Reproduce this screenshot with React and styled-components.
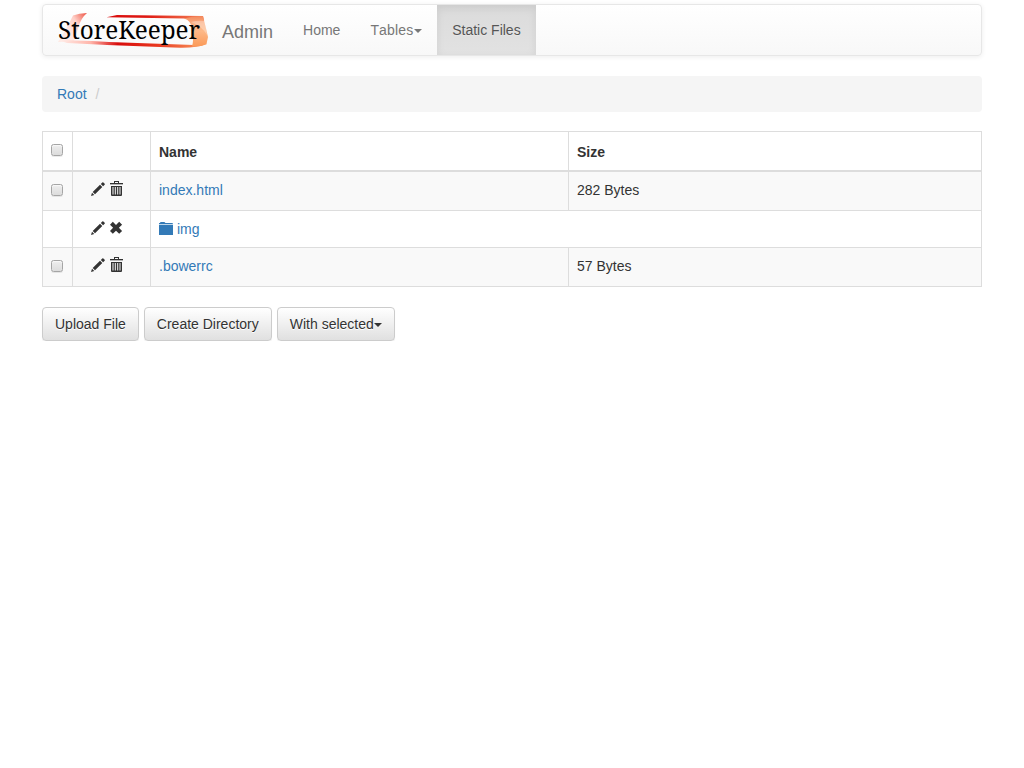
import React from 'react';
import styled, { createGlobalStyle } from 'styled-components';

const Global = createGlobalStyle`
  *, *::before, *::after { box-sizing: border-box; }
  body {
    margin: 0;
    background: #fff;
    color: #333;
    font: 14px/20px "Liberation Sans", Arial, sans-serif;
  }
`;

const Container = styled.div`
  width: 940px;
  margin: 0 auto;
  padding-top: 4px;
`;

const Navbar = styled.nav`
  display: flex;
  height: 52px;
  margin-bottom: 20px;
  border: 1px solid #e7e7e7;
  border-radius: 4px;
  background: linear-gradient(to bottom, #fff 0%, #f8f8f8 100%);
  box-shadow: inset 0 1px 0 rgba(255, 255, 255, 0.15), 0 1px 5px rgba(0, 0, 0, 0.075);
  text-shadow: 0 1px 0 rgba(255, 255, 255, 0.25);
`;

const Brand = styled.a`
  display: flex;
  padding: 5px 15px 0 14px;
  color: #777;
  font-size: 18px;
`;

const LogoImage = styled.svg`
  display: block;
  width: 154px;
  height: 40px;
  margin-right: 11px;
  text-shadow: none;
`;

const BrandName = styled.span`
  padding-top: 12px;
`;

const NavLink = styled.a`
  display: flex;
  align-items: center;
  height: 50px;
  padding: 0 15px;
  color: ${(p) => (p.$active ? '#555' : '#777')};
  background: ${(p) => (p.$active ? 'linear-gradient(to bottom, #dbdbdb 0%, #e2e2e2 100%)' : 'none')};
  box-shadow: ${(p) => (p.$active ? 'inset 0 3px 9px rgba(0, 0, 0, 0.075)' : 'none')};
`;

const MenuLabel = styled.span`
  width: 43.8px;
  font-kerning: none;
  letter-spacing: 0.15px;
`;

const Caret = styled.span`
  width: 8px;
  height: 4px;
  margin-top: 1px;
  border-top: 4px solid;
  border-right: 4px solid transparent;
  border-left: 4px solid transparent;
`;

const Breadcrumb = styled.div`
  height: 36px;
  margin-bottom: 19px;
  padding: 8px 15px;
  border-radius: 4px;
  background: #f5f5f5;
`;

const Link = styled.a`
  color: #337ab7;
`;

const Separator = styled.span`
  padding-left: 9px;
  color: #ccc;
`;

const Table = styled.table`
  width: 940px;
  margin-bottom: 20px;
  table-layout: fixed;
  border: solid #ddd;
  border-width: 1px 0 0 1px;
  border-collapse: separate;
  border-spacing: 0;
`;

const Column = styled.col`
  width: ${(p) => p.$width}px;
`;

const Row = styled.tr`
  height: ${(p) => p.$height}px;
  background: ${(p) => (p.$striped ? '#f9f9f9' : '#fff')};
`;

const HeadCell = styled.th`
  padding: 8px;
  border: solid #ddd;
  border-width: 0 1px 2px 0;
  text-align: left;
  vertical-align: bottom;
`;

const Cell = styled.td`
  padding: 8px;
  border: solid #ddd;
  border-width: 0 1px 1px 0;
  vertical-align: top;
`;

const Checkbox = styled.input.attrs({ type: 'checkbox' })`
  display: block;
  appearance: none;
  width: 12px;
  height: 12px;
  margin: ${(p) => (p.$head ? '0 0 6px' : '4px 0 0')};
  border: 1px solid #a5a5a5;
  border-radius: 2.5px;
  background: linear-gradient(#eee, #dcdcdc);
  box-shadow: 0 1px 0 rgba(0, 0, 0, 0.08), inset 0 1px 1px rgba(255, 255, 255, 0.6);
`;

const Actions = styled.div`
  display: flex;
  gap: 4px;
  padding: 1px 0 0 10px;
`;

const Glyph = styled.svg`
  display: block;
  flex: none;
  width: 15px;
  height: 16px;
  fill: currentColor;
`;

const FolderLink = styled(Link)`
  display: flex;
  align-items: center;
  gap: 3px;
  height: 20px;
`;

const ButtonBar = styled.div`
  display: flex;
  gap: 5px;
`;

const Button = styled.button`
  display: flex;
  align-items: center;
  height: 34px;
  padding: 0 12px;
  border: 1px solid #ccc;
  border-radius: 4px;
  background: linear-gradient(to bottom, #fff 0%, #e0e0e0 100%);
  box-shadow: inset 0 1px 0 rgba(255, 255, 255, 0.15), 0 1px 1px rgba(0, 0, 0, 0.075);
  color: #333;
  font: inherit;
  text-shadow: 0 1px 0 #fff;
  white-space: nowrap;
`;

const Logo = () => (
  <LogoImage viewBox="0 0 154 40" role="img" aria-label="StoreKeeper">
    <defs>
      <linearGradient id="left" gradientUnits="userSpaceOnUse" x1="8" x2="29" y1="18" y2="3">
        <stop offset="0" stopColor="#ffe8e3" />
        <stop offset=".5" stopColor="#ffd0c8" />
        <stop offset="1" stopColor="#ee5848" />
      </linearGradient>
      <linearGradient id="top" x1="0" x2="1">
        <stop offset="0" stopColor="#d90d0d" />
        <stop offset=".4" stopColor="#de1812" />
        <stop offset="1" stopColor="#f58256" />
      </linearGradient>
      <linearGradient id="bottom" x1="0" x2="1">
        <stop offset="0" stopColor="#fff1ed" />
        <stop offset=".22" stopColor="#ffb5aa" />
        <stop offset=".4" stopColor="#d80c0c" />
        <stop offset=".66" stopColor="#e8361f" />
        <stop offset="1" stopColor="#fba062" />
      </linearGradient>
      <linearGradient id="right" x1="0" x2="0" y1="0" y2="1">
        <stop offset="0" stopColor="#f3885c" />
        <stop offset=".25" stopColor="#fbb083" />
        <stop offset=".5" stopColor="#fdb887" />
        <stop offset="1" stopColor="#fb9a58" />
      </linearGradient>
    </defs>
    <path d="M16 5.5 Q22 3 30 3 Q24 8 21.5 17 L17 31 L1 32 Q8 22 16 5.5Z" fill="url(#left)" />
    <path d="M1 30 L35 31 L52 32 L137 35 L144 33 L150 34 Q140 38 123 37.7 L50 35 L10 33Z" fill="url(#bottom)" />
    <path d="M49.5 7.3 L60 5 L146 6 L147 10 L134 10 L127 8.5Z" fill="url(#top)" />
    <path d="M127 8.5 Q138 5.5 146 6.3 Q148 14 151 27 L149.5 34 Q143 37 135 36.5 Q137 30 135.5 20 Q134 10 127 8.5Z" fill="url(#right)" />
    <path d="M134 12 Q141 10 148 11 L150 25 Q145 16 134 12Z" fill="#fff" opacity=".3" />
    <text x="1" y="29" textLength="142" lengthAdjust="spacingAndGlyphs" fontFamily='"Noto Serif", "Droid Serif", "DejaVu Serif Condensed", "DejaVu Serif", serif' fontSize="25" fill="#000">StoreKeeper</text>
  </LogoImage>
);

const Pencil = () => (
  <Glyph viewBox="0 0 15 16">
    <path d="M0 15 L1 11.8 L3.3 14 Z M1.7 11 L9 3.7 L11.3 6 L4 13.3 Z M9.8 2.9 L11.3 1.4 Q11.8 .9 12.4 1.4 L13.7 2.7 Q14.2 3.3 13.6 3.8 L12.1 5.2 Z" />
  </Glyph>
);

const Trash = () => (
  <Glyph viewBox="0 0 15 16">
    <path d="M4 0H9V2H13V3H0V2H4ZM5 1V2H8V1Z" fillRule="evenodd" />
    <path d="M0 3H13V4H0Z" opacity=".35" />
    <path d="M1 5H12V14Q12 15 11 15H2Q1 15 1 14ZM2.5 6V13.5H3.5V6ZM4.8 6V13.5H5.8V6ZM7.2 6V13.5H8.2V6ZM9.5 6V13.5H10.5V6Z" fillRule="evenodd" />
  </Glyph>
);

const Remove = () => (
  <Glyph viewBox="0 0 15 16">
    <path d="M2.8 1.8 L6 5 L9.2 1.8 L12.1 4.7 L8.9 7.8 L12.1 11 L9.2 13.8 L6 10.7 L2.8 13.8 L0 11 L3.1 7.8 L0 4.7 Z" />
  </Glyph>
);

const Folder = () => (
  <Glyph viewBox="0 0 15 16">
    <path d="M0 3V2H1Q1 1 2 1H5Q6 1 6.4 2H13Q14 2 14 3Z" />
    <path d="M0 3H14V4H0Z" opacity=".3" />
    <path d="M0 4H14V14H0Z" />
  </Glyph>
);

const FileRow = ({ name, size }) => (
  <Row $height={39} $striped>
    <Cell><Checkbox aria-label={name} /></Cell>
    <Cell><Actions><Pencil /><Trash /></Actions></Cell>
    <Cell><Link>{name}</Link></Cell>
    <Cell>{size}</Cell>
  </Row>
);

const DirectoryRow = ({ name }) => (
  <Row $height={37}>
    <Cell />
    <Cell><Actions><Pencil /><Remove /></Actions></Cell>
    <Cell colSpan={2}><FolderLink><Folder />{name}</FolderLink></Cell>
  </Row>
);

export default function App() {
  return (
    <>
      <Global />
      <Container>
        <Navbar>
          <Brand><Logo /><BrandName>Admin</BrandName></Brand>
          <NavLink>Home</NavLink>
          <NavLink><MenuLabel>Tables</MenuLabel><Caret /></NavLink>
          <NavLink $active>Static Files</NavLink>
        </Navbar>
        <Breadcrumb><Link>Root</Link><Separator>/</Separator></Breadcrumb>
        <Table>
          <colgroup>
            <Column $width={30} />
            <Column $width={78} />
            <Column $width={418} />
            <Column $width={413} />
          </colgroup>
          <thead>
            <Row $height={40}>
              <HeadCell><Checkbox $head aria-label="Select all" /></HeadCell>
              <HeadCell />
              <HeadCell>Name</HeadCell>
              <HeadCell>Size</HeadCell>
            </Row>
          </thead>
          <tbody>
            <FileRow name="index.html" size="282 Bytes" />
            <DirectoryRow name="img" />
            <FileRow name=".bowerrc" size="57 Bytes" />
          </tbody>
        </Table>
        <ButtonBar>
          <Button>Upload File</Button>
          <Button>Create Directory</Button>
          <Button>With selected<Caret /></Button>
        </ButtonBar>
      </Container>
    </>
  );
}
